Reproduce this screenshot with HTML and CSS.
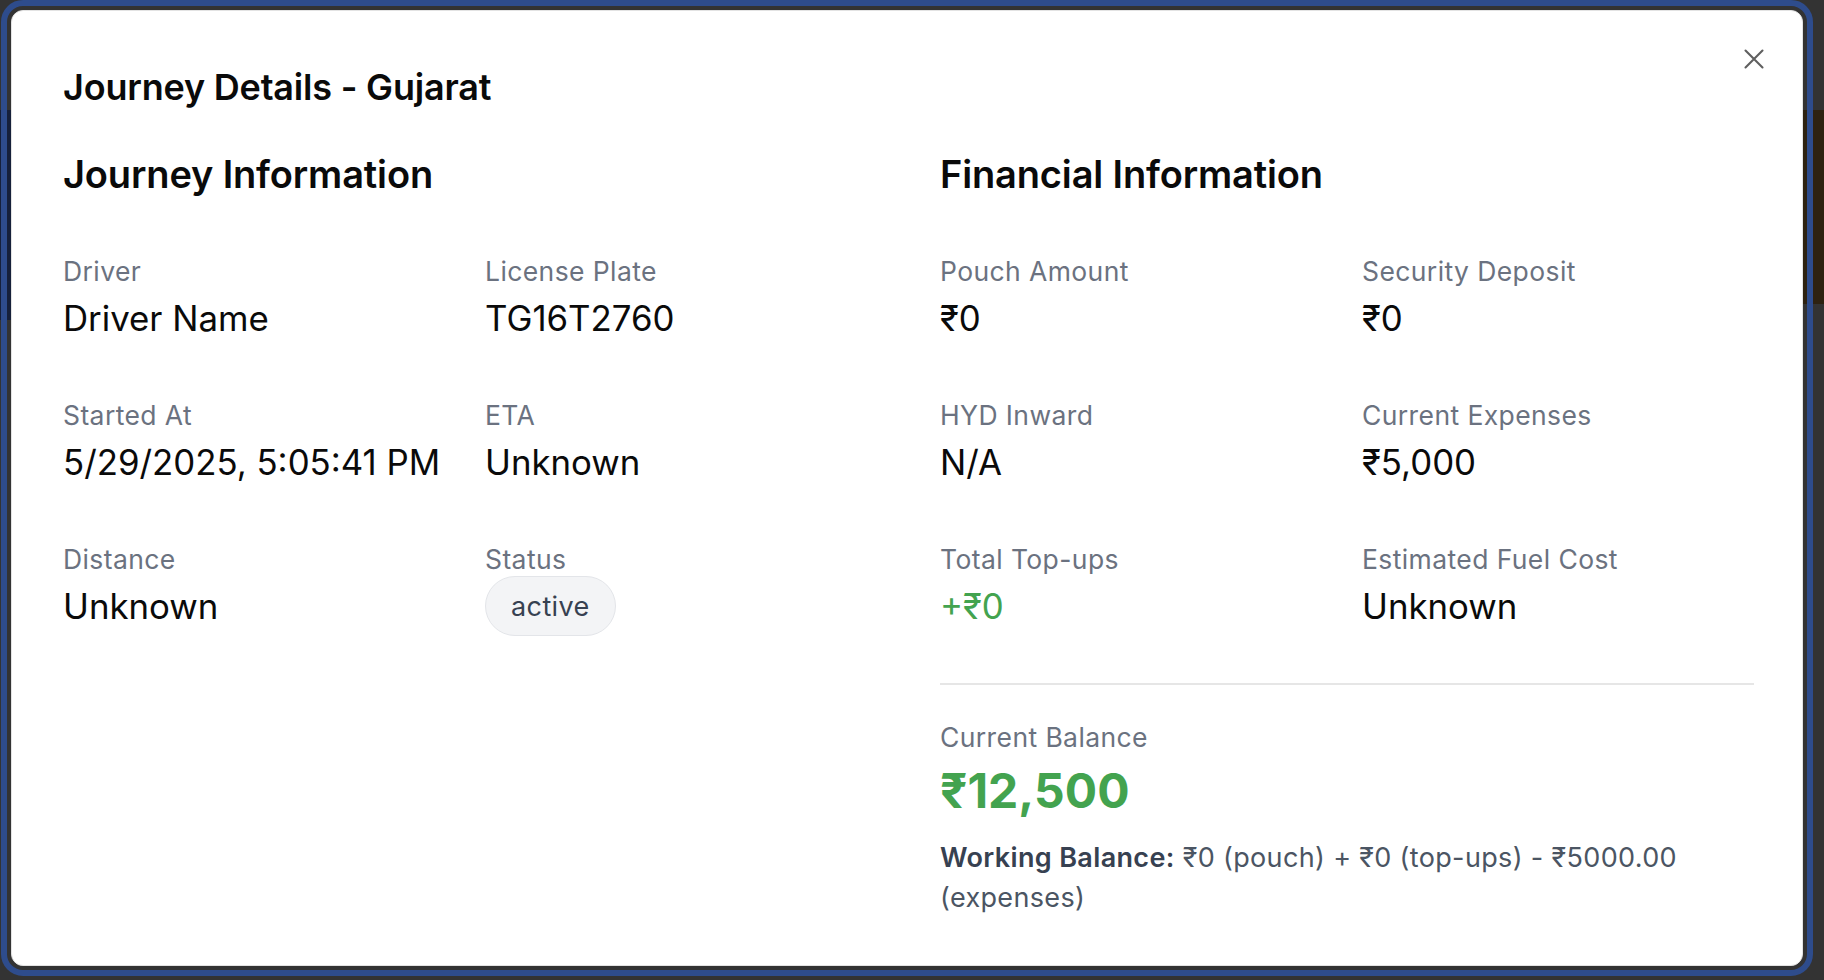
FILE: index.html
```html
<!DOCTYPE html>
<html lang="en">
<head>
<meta charset="utf-8">
<title>Journey Details - Gujarat</title>
<link rel="stylesheet" href="styles.css">
</head>
<body>
<div class="page">
  <div class="page-band">
    <div class="band-left"></div>
    <div class="band-right"></div>
  </div>
</div>

<div class="overlay">
  <div class="modal" role="dialog" aria-labelledby="dlg-title">
    <button class="close" aria-label="Close">
      <svg width="20" height="20" viewBox="0 0 20 20" fill="none" stroke="#5f5f5f" stroke-width="2.1" stroke-linecap="round"><path d="M1.5 1.5 L18.5 18.5 M18.5 1.5 L1.5 18.5"/></svg>
    </button>
    <h1 class="title" id="dlg-title">Journey Details - Gujarat</h1>

    <div class="columns">
      <section class="col">
        <h2 class="heading">Journey Information</h2>
        <div class="fields">
          <div class="field"><div class="label">Driver</div><div class="value">Driver Name</div></div>
          <div class="field"><div class="label">License Plate</div><div class="value">TG16T2760</div></div>
          <div class="field"><div class="label">Started At</div><div class="value">5/29/2025, 5:05:41 PM</div></div>
          <div class="field"><div class="label">ETA</div><div class="value">Unknown</div></div>
          <div class="field"><div class="label">Distance</div><div class="value">Unknown</div></div>
          <div class="field"><div class="label">Status</div><div class="value"><span class="badge">active</span></div></div>
        </div>
      </section>

      <section class="col">
        <h2 class="heading">Financial Information</h2>
        <div class="fields">
          <div class="field"><div class="label">Pouch Amount</div><div class="value">₹0</div></div>
          <div class="field"><div class="label">Security Deposit</div><div class="value">₹0</div></div>
          <div class="field"><div class="label">HYD Inward</div><div class="value">N/A</div></div>
          <div class="field"><div class="label">Current Expenses</div><div class="value">₹5,000</div></div>
          <div class="field"><div class="label">Total Top-ups</div><div class="value green">+₹0</div></div>
          <div class="field"><div class="label">Estimated Fuel Cost</div><div class="value">Unknown</div></div>
        </div>
        <div class="balance">
          <div class="label">Current Balance</div>
          <div class="amount">₹12,500</div>
          <p class="working"><strong>Working Balance:</strong> ₹0 (pouch) + ₹0 (top-ups) - ₹5000.00 (expenses)</p>
        </div>
      </section>
    </div>
  </div>
</div>
</body>
</html>
```

FILE: styles.css
```css
* { box-sizing: border-box; }

html, body {
  margin: 0;
  height: 100%;
}

body {
  background: #333333;
  font-family: Inter, "Noto Sans", "Liberation Sans", sans-serif;
  overflow: hidden;
}

.page {
  height: 100%;
}

.page-band {
  display: flex;
  justify-content: space-between;
  padding-top: 110px;
}

.band-left {
  width: 60px;
  height: 210px;
  background: #16203a;
}

.band-right {
  width: 60px;
  height: 194px;
  background: #2e2211;
}

.overlay {
  position: fixed;
  inset: 0;
  padding: 10px 21px 14px 11px;
  display: flex;
}

.modal {
  position: relative;
  flex: 1;
  background: #ffffff;
  border: 1px solid #e3e3e3;
  border-radius: 12px;
  outline: 6px solid #2e4c8c;
  outline-offset: 4px;
  padding: 54px 48px 0 51px;
  color: #0a0a0a;
}

.close {
  position: absolute;
  top: 38px;
  right: 38px;
  width: 20px;
  height: 20px;
  padding: 0;
  border: 0;
  background: none;
  display: flex;
}

.title {
  margin: 0;
  font-size: 36px;
  line-height: 44px;
  font-weight: 600;
  letter-spacing: -0.2px;
}

.columns {
  margin-top: 43px;
  display: grid;
  grid-template-columns: 1fr 1fr;
  column-gap: 63px;
}

.heading {
  margin: 0;
  font-size: 38px;
  line-height: 44px;
  font-weight: 600;
  letter-spacing: -0.15px;
}

.fields {
  margin-top: 57px;
  display: grid;
  grid-template-columns: 1fr 1fr;
  column-gap: 30px;
  row-gap: 54px;
}

.label {
  font-size: 26.5px;
  line-height: 36px;
  letter-spacing: 0.4px;
  color: #6b7280;
}

.value {
  margin-top: 4px;
  font-size: 34.8px;
  line-height: 50px;
  color: #0a0a0a;
}

.value.green { color: #43a34f; }

.badge {
  display: inline-flex;
  align-items: center;
  height: 60px;
  margin-top: -5px;
  padding: 0 25px;
  border: 1px solid #e3e5e9;
  border-radius: 30px;
  background: #f3f4f6;
  color: #374151;
  font-size: 27px;
  letter-spacing: 0.4px;
  line-height: 1;
  vertical-align: top;
}

.balance {
  margin-top: 52px;
  padding-top: 34px;
  border-top: 2px solid #e6e6e6;
}

.amount {
  margin-top: 8px;
  font-size: 48px;
  line-height: 56px;
  font-weight: 700;
  color: #43a34f;
}

.working {
  margin: 19px 0 0;
  font-size: 27px;
  line-height: 40px;
  letter-spacing: 0.35px;
  color: #4b5563;
}

.working strong {
  font-weight: 600;
  color: #374151;
}
```
